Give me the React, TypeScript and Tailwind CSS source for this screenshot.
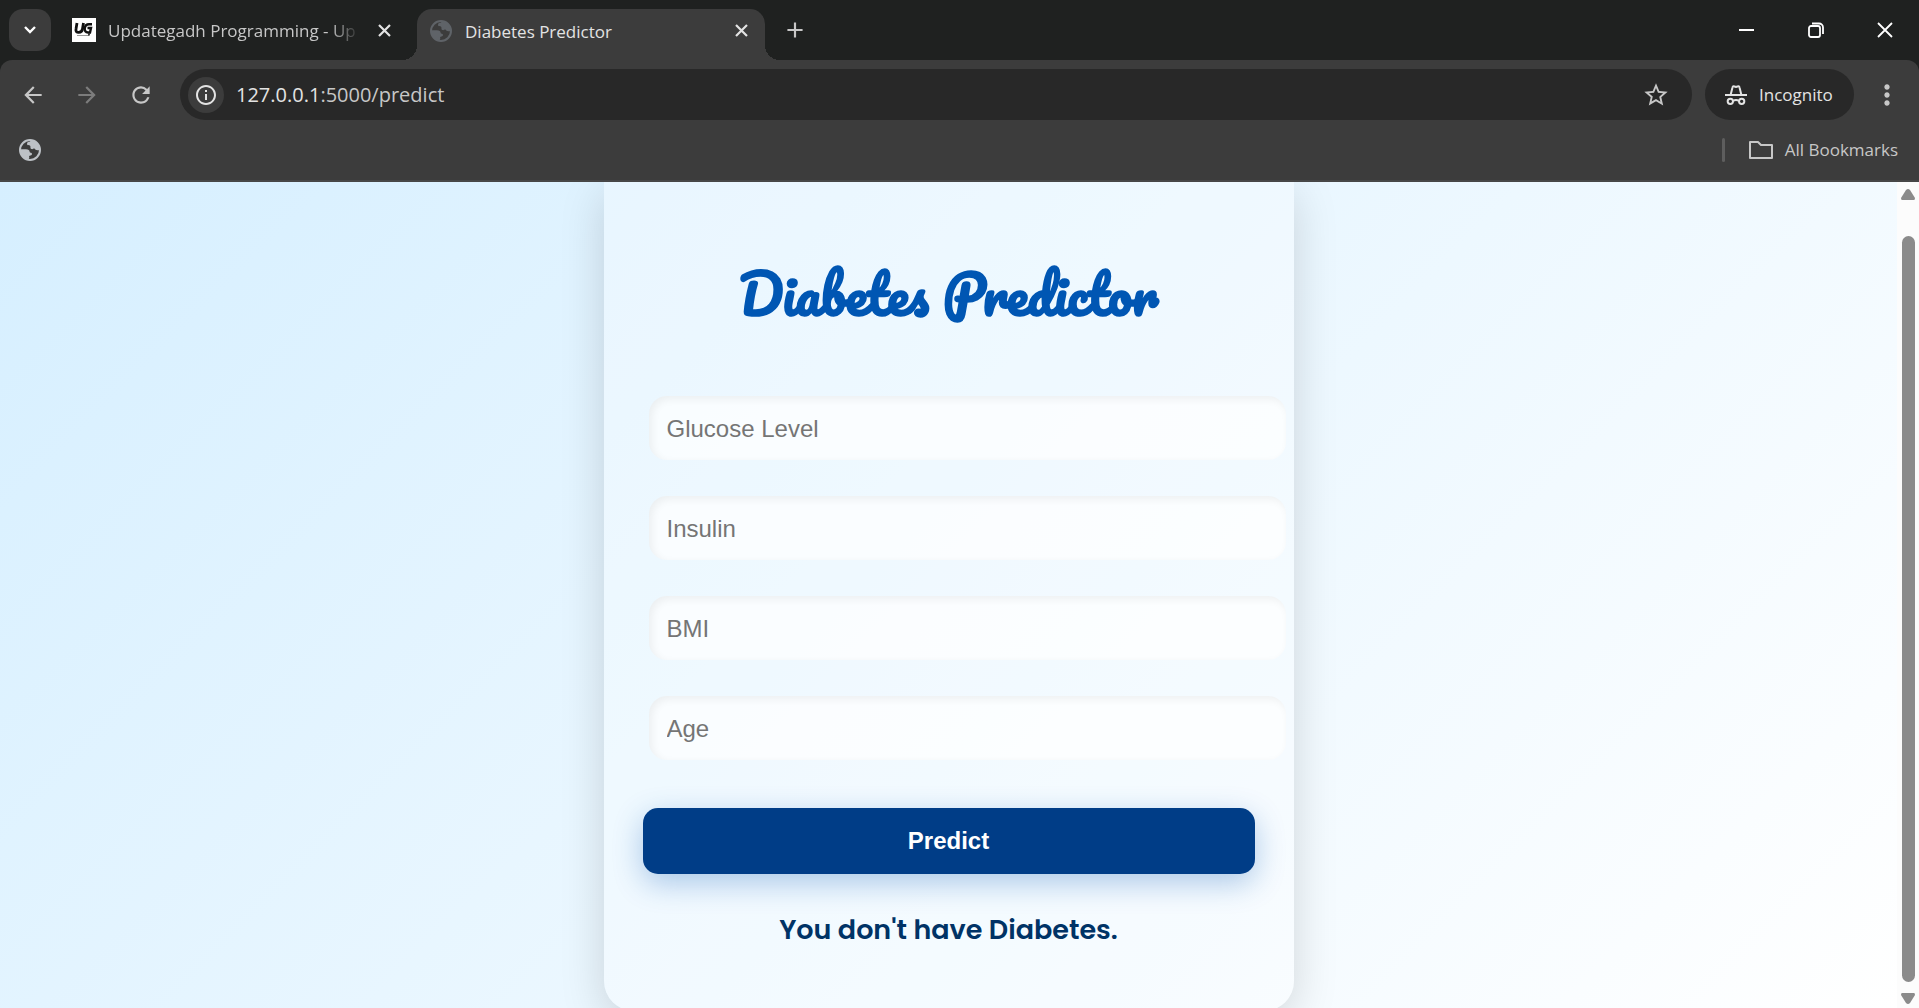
import { useState } from 'react';
import type { ReactNode } from 'react';
import { MdArrowBack, MdArrowForward, MdRefresh, MdInfoOutline, MdStarOutline, MdAdd, MdMoreVert } from 'react-icons/md';

const FIELDS = [
  { id: 'glucose', label: 'Glucose Level' },
  { id: 'insulin', label: 'Insulin' },
  { id: 'bmi', label: 'BMI' },
  { id: 'age', label: 'Age' },
];

function GlobeIcon({ className }: { className?: string }) {
  return (
    <svg viewBox="0 0 66 66" className={className} aria-hidden="true">
      <circle cx="33" cy="33" r="30" fill="none" stroke="currentColor" strokeWidth="6" />
      <path
        fill="currentColor"
        d="M36 3c-1 3-3 5-8 6-5 1-4 5-3 9 3 2 8 0 9 3 1 4-1 7 3 9 5 2 7-3 10-1 2 3 5 5 15 5C62 16 50 4 36 3zM4 31h17c7 0 11 3 11 8 0 3 7 1 7 6 0 4-4 4-7 5-3 1-1 4-1 6-1 4-4 5-4 6C12 60 3 46 4 31z"
      />
    </svg>
  );
}

function IncognitoIcon() {
  return (
    <svg viewBox="0 0 66 60" className="h-5 w-[22px] shrink-0" fill="none" stroke="currentColor" strokeWidth="6" aria-hidden="true">
      <path d="M0 30h66" />
      <path d="M17 29l5-20c1-6 3-6 6-5 3 2 7 2 10 0 3-1 5-1 6 5l5 20" />
      <circle cx="16" cy="49" r="8" />
      <circle cx="50" cy="49" r="8" />
      <path d="M24 48c5-3 13-3 18 0" />
    </svg>
  );
}

function TabCloseIcon() {
  return (
    <svg viewBox="0 0 13 13" className="h-[13px] w-[13px]" fill="none" stroke="currentColor" strokeWidth="2.2" aria-hidden="true">
      <path d="M1 1l11 11M12 1L1 12" />
    </svg>
  );
}

interface IconButtonProps {
  label: string;
  className?: string;
  children: ReactNode;
}

function IconButton({ label, className = '', children }: IconButtonProps) {
  return (
    <button type="button" aria-label={label} className={`flex shrink-0 items-center justify-center ${className}`}>
      {children}
    </button>
  );
}

function TabStrip() {
  return (
    <div className="flex h-[60px] items-center bg-[#1f2120] text-[#c7c7c7]">
      <IconButton label="Search tabs" className="ml-[9px] h-[42px] w-[42px] rounded-[14px] bg-[#3c3c3c] text-white">
        <svg viewBox="0 0 12 8" className="h-2 w-3" fill="none" stroke="currentColor" strokeWidth="2.4" aria-hidden="true">
          <path d="M1 1l5 5 5-5" />
        </svg>
      </IconButton>

      <div className="ml-[21px] flex w-[345px] items-center">
        <svg viewBox="0 0 24 24" className="h-6 w-6 shrink-0 bg-white" fill="none" stroke="#111" aria-hidden="true">
          <path d="M5 5l-1 6c-1 5 6 4 6.500 0L11.500 5" strokeWidth="2.800" />
          <path d="M20 6.200h-3c-5 0-6 8.300-1 8.300h2l1-4.500h-3.500" strokeWidth="2.400" />
          <path d="M5 17.500h12" strokeWidth="1" stroke="#999" />
          <path d="M17 15.500v2" strokeWidth="1.600" />
        </svg>
        <span className="ml-3 w-[252px] overflow-hidden whitespace-nowrap pt-0.5 text-[17px] leading-6 [mask-image:linear-gradient(to_right,black_88%,transparent)]">
          Updategadh Programming - Up
        </span>
        <IconButton label="Close tab" className="ml-3 h-6 w-6 text-[#e3e3e3]">
          <TabCloseIcon />
        </IconButton>
      </div>

      <div className="relative mt-[9px] flex h-[51px] w-[348px] items-center self-start rounded-t-[15px] bg-[#3c3c3c] pb-2 pl-[13px] text-[#e3e3e3]">
        <span className="absolute -left-[15px] bottom-0 h-[15px] w-[15px] bg-[radial-gradient(circle_at_top_left,transparent_15px,#3c3c3c_15px)]" />
        <span className="absolute -right-[15px] bottom-0 h-[15px] w-[15px] bg-[radial-gradient(circle_at_top_right,transparent_15px,#3c3c3c_15px)]" />
        <GlobeIcon className="h-[22px] w-[22px] text-[#5f6368]" />
        <span className="ml-[13px] flex-1 pt-0.5 text-[17px] leading-6">Diabetes Predictor</span>
        <IconButton label="Close tab" className="mr-3 h-6 w-6">
          <TabCloseIcon />
        </IconButton>
      </div>

      <IconButton label="New tab" className="ml-[18px] h-6 w-6">
        <MdAdd className="h-[26px] w-[26px] shrink-0" />
      </IconButton>

      <div className="ml-auto flex text-white">
        <IconButton label="Minimize" className="h-[60px] w-[69px]">
          <span className="h-0.5 w-[15px] bg-white" />
        </IconButton>
        <IconButton label="Restore" className="h-[60px] w-[69px]">
          <svg viewBox="0 0 16 16" className="h-4 w-4" fill="none" stroke="currentColor" strokeWidth="1.8" aria-hidden="true">
            <rect x="1" y="4" width="11" height="11" rx="2" />
            <path d="M4 1.500h7a4 4 0 0 1 4 4V12" />
          </svg>
        </IconButton>
        <IconButton label="Close" className="h-[60px] w-[69px]">
          <svg viewBox="0 0 16 16" className="h-4 w-4" fill="none" stroke="currentColor" strokeWidth="1.8" aria-hidden="true">
            <path d="M1 1l14 14M15 1L1 15" />
          </svg>
        </IconButton>
      </div>
    </div>
  );
}

function Toolbar() {
  return (
    <div className="flex items-center rounded-t-[12px] bg-[#3c3c3c] pt-[9px] text-[#c7c7c7]">
      <IconButton label="Back" className="ml-[21px] h-6 w-6">
        <MdArrowBack className="h-[26px] w-[26px] shrink-0" />
      </IconButton>
      <IconButton label="Forward" className="ml-[30px] h-6 w-6 text-[#7c7c7c]">
        <MdArrowForward className="h-[26px] w-[26px] shrink-0" />
      </IconButton>
      <IconButton label="Reload" className="ml-[30px] h-6 w-6">
        <MdRefresh className="h-[26px] w-[26px] shrink-0" />
      </IconButton>

      <div className="ml-[27px] flex h-[51px] flex-1 items-center rounded-full bg-[#282828] pr-6 pl-2">
        <IconButton label="View site information" className="h-9 w-9 rounded-full bg-[#3c3c3c] text-[#e3e3e3]">
          <MdInfoOutline className="h-6 w-6" />
        </IconButton>
        <span className="ml-3 flex-1 text-[20px] leading-6">
          <span className="text-[#e3e3e3]">127.0.0.1</span>:5000/predict
        </span>
        <IconButton label="Bookmark this tab" className="h-6 w-6">
          <MdStarOutline className="h-7 w-7 shrink-0" />
        </IconButton>
      </div>

      <button type="button" className="ml-[13px] flex h-[51px] w-[149px] items-center gap-3 rounded-full bg-[#282828] pl-5 text-[17px] text-[#e3e3e3]">
        <IncognitoIcon />
        Incognito
      </button>
      <IconButton label="Menu" className="mr-5 ml-[21px] h-6 w-6">
        <MdMoreVert className="h-8 w-8 shrink-0" />
      </IconButton>
    </div>
  );
}

function BookmarksBar() {
  return (
    <div className="flex h-[62px] items-center border-b-2 border-[#474747] bg-[#3c3c3c] pr-[21px] pl-[19px] text-[#c7c7c7]">
      <IconButton label="Bookmark" className="h-[22px] w-[22px] text-[#bdc1c6]">
        <GlobeIcon className="h-[22px] w-[22px]" />
      </IconButton>
      <span className="ml-auto h-6 w-[3px] rounded-full bg-[#5e5e5e]" />
      <button type="button" className="ml-6 flex items-center gap-3 text-[17px] leading-6">
        <svg viewBox="0 0 24 18" className="h-[18px] w-6" fill="none" stroke="currentColor" strokeWidth="2" strokeLinejoin="round" aria-hidden="true">
          <path d="M1 1h8l3 3h11v13H1z" />
        </svg>
        All Bookmarks
      </button>
    </div>
  );
}

function Scrollbar() {
  return (
    <div className="flex w-[22px] flex-col items-center justify-between bg-[#fcfcfc] pt-[7px] pb-1 text-[#8b8b8b]" aria-hidden="true">
      <svg viewBox="0 0 14 11" className="h-[11px] w-3.5" fill="currentColor">
        <path d="M7 0q1 0 2 1l5 8q0 2-1 2H1q-1 0-1-2l5-8q1-1 2-1z" />
      </svg>
      <span className="mt-9 mb-[11px] w-[13px] flex-1 rounded-full bg-[#8b8b8b]" />
      <svg viewBox="0 0 14 11" className="h-[11px] w-3.5" fill="currentColor">
        <path d="M7 11q-1 0-2-1L0 2q0-2 1-2h12q1 0 1 2l-5 8q-1 1-2 1z" />
      </svg>
    </div>
  );
}

function PredictorForm() {
  const [values, setValues] = useState<Record<string, string>>({});

  return (
    <form
      onSubmit={(e) => e.preventDefault()}
      className="w-[690px] rounded-b-[30px] bg-white/30 px-[39px] pt-[68px] pb-[61px] shadow-[0_12px_45px_rgba(0,0,0,0.15)]"
    >
      <h1 className="text-center font-[Pacifico,Lato,cursive] text-[53px] leading-[88px] font-bold text-[#0056b3]">
        Diabetes Predictor
      </h1>

      <div className="mt-[58px] flex flex-col gap-9">
        {FIELDS.map((field) => (
          <input
            key={field.id}
            id={field.id}
            name={field.id}
            aria-label={field.label}
            placeholder={field.label}
            value={values[field.id] ?? ''}
            onChange={(e) => setValues({ ...values, [field.id]: e.target.value })}
            className="ml-1.5 h-16 w-[calc(100%+25px)] rounded-[18px] bg-white/70 px-[18px] pt-0.5 font-['Liberation_Sans',Arial,sans-serif] text-[24px] text-[#333] shadow-[inset_3px_3px_9px_rgba(0,0,0,0.06)] outline-none placeholder:text-[#757575]"
          />
        ))}
      </div>

      <button
        type="submit"
        className="mt-12 h-[66px] w-full rounded-[15px] bg-[#003d87] font-['Liberation_Sans',Arial,sans-serif] text-[24px] font-bold text-white shadow-[0_9px_30px_rgba(0,86,179,0.3)]"
      >
        Predict
      </button>

      <p className="mt-9 text-center font-[Poppins,Inter,sans-serif] text-[27px] leading-10 font-semibold text-[#003366]">
        You don't have Diabetes.
      </p>
    </form>
  );
}

export default function App() {
  return (
    <div className="flex h-screen flex-col overflow-hidden bg-[#1f2120] font-['Segoe_UI','Open_Sans',sans-serif]">
      <header className="shrink-0">
        <TabStrip />
        <Toolbar />
        <BookmarksBar />
      </header>
      <div className="flex min-h-0 flex-1">
        <main className="flex flex-1 items-start justify-center overflow-hidden bg-[linear-gradient(135deg,#d6efff,#ffffff)]">
          <PredictorForm />
        </main>
        <Scrollbar />
      </div>
    </div>
  );
}
